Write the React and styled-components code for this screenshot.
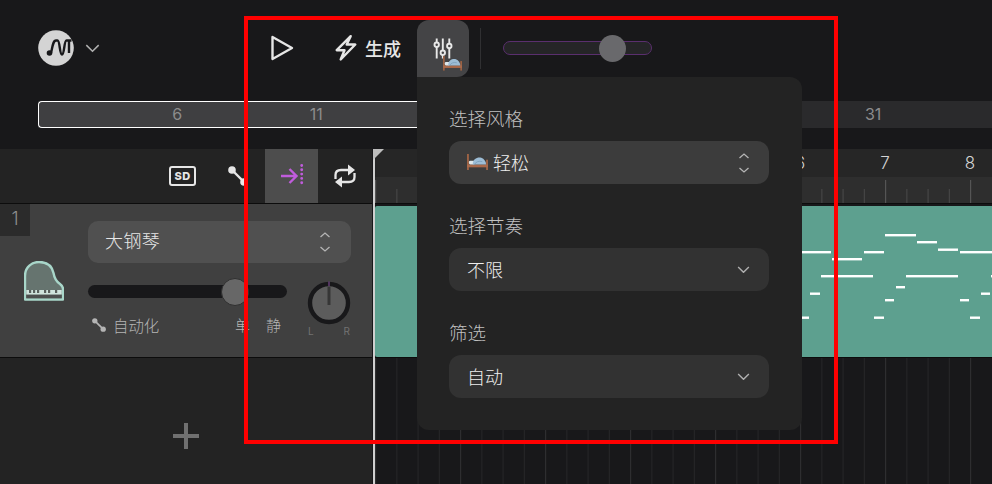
import styled, { createGlobalStyle } from "styled-components";

const GlobalStyle = createGlobalStyle`
  html, body {
    margin: 0;
    padding: 0;
    background: #18181a;
  }
  * {
    box-sizing: border-box;
  }
`;

const FONT = `Inter, "Noto Sans CJK SC", sans-serif`;

const BAR_WIDTH = 85;
const BEAT_WIDTH = BAR_WIDTH / 4;

const NOTES = [
  [801, 831, 251], [832, 862, 258], [864, 884, 251], [885, 916, 234],
  [917, 937, 241], [938, 958, 248.5], [960, 992, 251], [821, 873, 275],
  [906, 958, 275], [991, 992, 275], [896, 905, 286], [810, 820, 292.5],
  [981, 990, 292.5], [885, 894, 299], [960, 969, 299], [801, 809, 316.5],
  [874, 884, 316.5], [970, 980, 316.5],
];

const BEATS = Array.from({ length: 29 }, (_, i) => 375.6 + i * BEAT_WIDTH);

// labels under the popover never show, so those cells stay empty
const OVERVIEW_LABELS = ["6", "11", "", "", "", "31"];
const RULER_LABELS = ["", "", "", "", "6", "7", "8"];

const BedEmoji = ({ size = 21 }) => (
  <svg width={size} height={size * 0.82} viewBox="0 0 22 18">
    <rect x="0" y="1" width="2" height="17" fill="#9c6244" />
    <rect x="20" y="7" width="2" height="11" fill="#9c6244" />
    <rect x="0" y="12" width="22" height="3" fill="#a9694a" />
    <rect x="2" y="8" width="6" height="4" rx="1.5" fill="#dfe7ea" />
    <path d="M6 12 C6 6 11 4 15 5 C18 6 20 9 20 12 Z" fill="#9dbdd6" />
    <path d="M8 12 C9 9 13 8 16 9" stroke="#7fa2bd" fill="none" />
  </svg>
);

const LogoIcon = () => (
  <svg width="36" height="36" viewBox="38 30 36 36">
    <circle cx="56" cy="48" r="17.8" fill="#d4d4d4" />
    <circle cx="49.5" cy="53" r="2.8" fill="#18181a" />
    <path
      d="M51 53 C52.5 47 53 40.5 56 40.5 H57.5 C60 40.5 59.5 54.5 62 54.5 C64.5 54.5 64 40.5 66.5 40.5 H71.5 M69 40.5 V53"
      fill="none"
      stroke="#18181a"
      strokeWidth="2.4"
    />
  </svg>
);

const SmallChevron = ({ color = "#b0b0b0", width = 13, weight = 1.4 }) => (
  <svg width={width} height={width * 0.6} viewBox="0 0 13 8">
    <path d="M1 1 L6.5 6.5 L12 1" fill="none" stroke={color} strokeWidth={weight} />
  </svg>
);

const UpDown = () => (
  <svg width="12" height="20" viewBox="0 0 12 20">
    <path d="M1.5 5 L6 1 L10.5 5" fill="none" stroke="#b5b5b5" strokeWidth="1.3" />
    <path d="M1.5 15 L6 19 L10.5 15" fill="none" stroke="#b5b5b5" strokeWidth="1.3" />
  </svg>
);

const PlayIcon = () => (
  <svg width="24" height="26" viewBox="270 35 24 26">
    <path
      d="M272.5 37 L292 48 L272.5 59 Z"
      fill="none"
      stroke="#e6e6e6"
      strokeWidth="2.4"
      strokeLinejoin="round"
    />
  </svg>
);

const BoltIcon = () => (
  <svg width="24" height="28" viewBox="334 34.5 24 28">
    <path
      d="M350.7 36.7 L336.7 50.7 L344.5 50.7 L340.7 60 L355.3 45 L346.7 45 Z"
      fill="none"
      stroke="#e6e6e6"
      strokeWidth="2.4"
      strokeLinejoin="round"
    />
  </svg>
);

const SlidersIcon = () => (
  <svg width="20" height="24" viewBox="433 36 20 24">
    <g stroke="#e8e8e8" strokeWidth="1.9" fill="none">
      <path d="M436.7 37.5 V41.5 M436.7 46 V57.5" />
      <path d="M442.8 37.5 V49.5 M442.8 54 V57.5" />
      <path d="M449.3 37.5 V42.8 M449.3 47.2 V57.5" />
      <circle cx="436.7" cy="43.7" r="2.2" />
      <circle cx="442.8" cy="51.7" r="2.2" />
      <circle cx="449.3" cy="45" r="2.2" />
    </g>
  </svg>
);

const AutomationIcon = ({ size = 20, color = "#e6e6e6" }) => (
  <svg width={size} height={size} viewBox="0 0 20 20">
    <path d="M4 4 L16 16" stroke={color} strokeWidth="2.4" />
    <circle cx="4" cy="4" r="3.8" fill={color} />
    <circle cx="16" cy="16" r="3.8" fill={color} />
  </svg>
);

const PunchIcon = () => (
  <svg width="24" height="26" viewBox="280 163 24 26">
    <path
      d="M281 176 H296.5 M289.5 169 L296.5 176 L289.5 183"
      fill="none"
      stroke="#c05cdc"
      strokeWidth="2.4"
    />
    <path
      d="M301.7 165.5 V187"
      stroke="#c05cdc"
      strokeWidth="2.9"
      strokeLinecap="round"
      strokeDasharray="0 4.3"
    />
  </svg>
);

const LoopIcon = () => (
  <svg width="24" height="26" viewBox="334 164 24 26">
    <g fill="none" stroke="#e6e6e6" strokeWidth="2.3">
      <path d="M336.5 180 V176 Q336.5 171 342 171 H354" />
      <path d="M355.5 174 V178 Q355.5 183 350 183 H338" />
    </g>
    <path d="M349 165.5 L356 171 L349 176.5 Z" fill="#e6e6e6" />
    <path d="M343 177.5 L336 183 L343 188.5 Z" fill="#e6e6e6" />
  </svg>
);

const PianoIcon = () => (
  <svg width="40" height="40" viewBox="24 261 40 40">
    <path
      d="M25 299.5 V276 C25 267 32 262 39 262 C47 262 52 266 53.5 273 C54.5 279 57 282 60 284 C62 285.5 63 286.5 63 289 V299.5 Z"
      fill="#66746f"
      stroke="#a8d6c9"
      strokeWidth="2.4"
      strokeLinejoin="round"
    />
    <rect x="26.3" y="294.5" width="35.4" height="3.8" fill="#4d4f4e" />
    <rect x="26.3" y="290" width="35.4" height="4.5" fill="#cfe3dc" />
    <g fill="#59605d">
      <rect x="29" y="290" width="2.2" height="3" />
      <rect x="33" y="290" width="2.2" height="3" />
      <rect x="37" y="290" width="2.2" height="3" />
      <rect x="44" y="290" width="2.2" height="3" />
      <rect x="48" y="290" width="2.2" height="3" />
      <rect x="55" y="290" width="2.2" height="3" />
    </g>
  </svg>
);

const KnobIcon = () => (
  <svg width="44" height="44" viewBox="307 281 44 44">
    <circle cx="329" cy="303" r="19" fill="#5c5c5c" stroke="#18181a" strokeWidth="4.4" />
    <path d="M329 287 V305" stroke="#363636" strokeWidth="3" />
    <path d="M329 281.5 V286" stroke="#8a4fa3" strokeWidth="1" />
  </svg>
);

const RulerTicks = () => (
  <svg width="619" height="26" viewBox="373 177 619 26">
    {BEATS.map((x, i) => (
      <line
        key={x}
        x1={x}
        x2={x}
        y1={i % 4 === 0 ? 180 : 189}
        y2={203}
        stroke={i % 4 === 0 ? "#555" : "#464646"}
        strokeWidth="1.2"
      />
    ))}
  </svg>
);

const PianoRollNotes = () => (
  <svg width="617" height="151" viewBox="375 205 617 151">
    {NOTES.map(([x1, x2, y]) => (
      <rect key={`${x1}-${y}`} x={x1} y={y - 1} width={x2 - x1} height="2.4" fill="#fff" />
    ))}
  </svg>
);

const EmptyGrid = () => (
  <svg width="619" height="126" viewBox="373 358 619 126">
    {BEATS.map((x, i) => (
      <line key={x} x1={x} x2={x} y1={358} y2={484} stroke={i % 4 === 0 ? "#2e2e30" : "#252527"} strokeWidth="1.2" />
    ))}
  </svg>
);

const StyleField = ({ label, tone, caret, children }) => (
  <Field>
    <FieldLabel>{label}</FieldLabel>
    <SelectBox $tone={tone}>
      <SelectValue>{children}</SelectValue>
      {caret}
    </SelectBox>
  </Field>
);

export default function App() {
  return (
    <Page>
      <GlobalStyle />
      <TopBar>
        <LogoGroup>
          <LogoIcon />
          <SmallChevron width={15} weight={1.3} />
        </LogoGroup>
        <PlayButton>
          <PlayIcon />
        </PlayButton>
        <GenerateButton>
          <BoltIcon />
          <span>生成</span>
        </GenerateButton>
        <SettingsButton>
          <SlidersIcon />
          <SettingsBed>
            <BedEmoji size={19} />
          </SettingsBed>
        </SettingsButton>
        <Divider />
        <TempoTrack>
          <TempoThumb />
        </TempoTrack>
      </TopBar>

      <Overview>
        <OverviewSelection />
        {OVERVIEW_LABELS.map((label, i) => (
          <OverviewLabel key={i}>{label}</OverviewLabel>
        ))}
      </Overview>

      <Workspace>
        <SidePanel>
          <Toolbar>
            <SdBadge>SD</SdBadge>
            <ToolCell $width={54}>
              <AutomationIcon />
            </ToolCell>
            <ToolCell $width={53} $active>
              <PunchIcon />
            </ToolCell>
            <ToolCell $width={54}>
              <LoopIcon />
            </ToolCell>
          </Toolbar>
          <TrackRow>
            <TrackNumber>1</TrackNumber>
            <PianoSlot>
              <PianoIcon />
            </PianoSlot>
            <TrackControls>
              <InstrumentSelect>
                <InstrumentName>大钢琴</InstrumentName>
                <UpDown />
              </InstrumentSelect>
              <MixRow>
                <MixColumn>
                  <VolumeTrack>
                    <VolumeThumb />
                  </VolumeTrack>
                  <MixLabels>
                    <AutoLabel>
                      <AutomationIcon size={14} color="#b5b5b5" />
                      自动化
                    </AutoLabel>
                    <SoloMute>
                      <span>单</span>
                      <span>静</span>
                    </SoloMute>
                  </MixLabels>
                </MixColumn>
                <PanColumn>
                  <KnobIcon />
                  <PanLabels>
                    <span>L</span>
                    <span>R</span>
                  </PanLabels>
                </PanColumn>
              </MixRow>
            </TrackControls>
          </TrackRow>
          <AddTrack>
            <AddGlyph />
          </AddTrack>
        </SidePanel>

        <Timeline>
          <RulerNumbers>
            {RULER_LABELS.map((label, i) => (
              <RulerNumber key={i}>{label}</RulerNumber>
            ))}
          </RulerNumbers>
          <RulerTickBand>
            <RulerTicks />
          </RulerTickBand>
          <ClipLane>
            <Clip>
              <PianoRollNotes />
            </Clip>
          </ClipLane>
          <GridLane>
            <EmptyGrid />
          </GridLane>
        </Timeline>
      </Workspace>

      <Playhead />
      <PlayheadCap />

      <Popover>
        <StyleField label="选择风格" tone="#3c3c3c" caret={<UpDown />}>
          <BedEmoji size={21} />
          轻松
        </StyleField>
        <StyleField label="选择节奏" tone="#323232" caret={<SmallChevron />}>
          不限
        </StyleField>
        <StyleField label="筛选" tone="#323232" caret={<SmallChevron />}>
          自动
        </StyleField>
      </Popover>

      <Highlight />
    </Page>
  );
}

const Page = styled.div`
  position: relative;
  width: 992px;
  height: 484px;
  overflow: hidden;
  background: #18181a;
  color: #e6e6e6;
  font-family: ${FONT};
`;

const TopBar = styled.div`
  display: flex;
  align-items: flex-start;
  height: 101px;
  padding: 20px 0 0 38px;
`;

const LogoGroup = styled.div`
  display: flex;
  align-items: center;
  gap: 11px;
  height: 56px;
  width: 232px;
`;

const PlayButton = styled.div`
  display: flex;
  align-items: center;
  height: 56px;
  width: 64px;
`;

const GenerateButton = styled.div`
  display: flex;
  align-items: center;
  gap: 7px;
  height: 56px;
  width: 83px;
  padding-bottom: 1px;
  font-size: 18px;
  font-weight: 500;
`;

const SettingsButton = styled.div`
  position: relative;
  display: flex;
  align-items: center;
  width: 52px;
  height: 57px;
  padding-left: 16px;
  background: #444446;
  border-radius: 12px 12px 12px 0;
`;

const SettingsBed = styled.div`
  position: absolute;
  left: 26px;
  top: 35px;
  line-height: 0;
`;

const Divider = styled.div`
  width: 1px;
  height: 41px;
  margin: 8px 22px 0 11px;
  background: #303032;
`;

const TempoTrack = styled.div`
  position: relative;
  width: 149px;
  height: 14px;
  margin-top: 21px;
  background: #252527;
  border: 1px solid #5a2f6e;
  border-radius: 7px;
`;

const TempoThumb = styled.div`
  position: absolute;
  left: 95px;
  top: -7px;
  width: 27px;
  height: 27px;
  border-radius: 50%;
  background: #69696c;
`;

const Overview = styled.div`
  position: relative;
  display: flex;
  height: 27px;
  margin-left: 38px;
  padding-left: 69.6px;
  background: #2a2a2c;
`;

const OverviewSelection = styled.div`
  position: absolute;
  left: 0;
  top: 0;
  width: 560px;
  height: 27px;
  background: #3f3f41;
  border: 1px solid #ffffff;
  border-width: 1px 0 1px 1px;
  border-radius: 4px 0 0 4px;
`;

const OverviewLabel = styled.div`
  position: relative;
  width: 139.2px;
  text-align: center;
  font-size: 16px;
  line-height: 27px;
  color: #8c8c8c;
`;

const Workspace = styled.div`
  display: grid;
  grid-template-columns: 373px 1fr;
  margin-top: 21px;
  height: 335px;
`;

const SidePanel = styled.div`
  display: flex;
  flex-direction: column;
  padding-right: 1px;
`;

const Toolbar = styled.div`
  display: flex;
  align-items: center;
  justify-content: flex-end;
  height: 55px;
  background: #232323;
  border-bottom: 1px solid #0c0c0c;
`;

const SdBadge = styled.div`
  width: 27px;
  height: 20px;
  margin-right: 15px;
  border: 2px solid #e6e6e6;
  border-radius: 3px;
  font-size: 11px;
  font-weight: 800;
  line-height: 16px;
  text-align: center;
  letter-spacing: 0.5px;
`;

const ToolCell = styled.div`
  display: flex;
  align-items: center;
  justify-content: center;
  width: ${(p) => p.$width}px;
  height: 54px;
  background: ${(p) => (p.$active ? "#4d4d4d" : "transparent")};
`;

const TrackRow = styled.div`
  position: relative;
  display: flex;
  height: 154px;
  background: #404040;
  border-bottom: 1px solid #0c0c0c;
`;

const TrackNumber = styled.div`
  position: absolute;
  left: 0;
  top: 0;
  width: 30px;
  height: 32px;
  background: #2b2b2b;
  color: #8f8f8f;
  font-size: 18px;
  font-weight: 300;
  line-height: 30px;
  text-align: center;
`;

const PianoSlot = styled.div`
  width: 88px;
  padding: 57px 0 0 24px;
  line-height: 0;
`;

const TrackControls = styled.div`
  display: flex;
  flex-direction: column;
  width: 263px;
  padding-top: 17px;
`;

const InstrumentSelect = styled.div`
  display: flex;
  align-items: center;
  justify-content: space-between;
  height: 42px;
  padding: 0 20px 0 17px;
  background: #505050;
  border-radius: 10px;
  font-size: 18px;
  font-weight: 300;
`;

const InstrumentName = styled.span`
  padding-bottom: 5px;
  letter-spacing: 0.4px;
`;

const MixRow = styled.div`
  display: flex;
  justify-content: space-between;
  margin-top: 18px;
`;

const MixColumn = styled.div`
  display: flex;
  flex-direction: column;
  width: 199px;
`;

const VolumeTrack = styled.div`
  position: relative;
  height: 13px;
  margin-top: 4px;
  background: #18181a;
  border-radius: 7px;
`;

const VolumeThumb = styled.div`
  position: absolute;
  left: 133px;
  top: -7px;
  width: 28px;
  height: 28px;
  border-radius: 50%;
  background: #676767;
  border: 1px solid #2f2f2f;
`;

const MixLabels = styled.div`
  display: flex;
  justify-content: space-between;
  margin-top: 16px;
  padding: 0 6px 0 4px;
  color: #b5b5b5;
  font-size: 15px;
  font-weight: 300;
`;

const AutoLabel = styled.div`
  display: flex;
  align-items: center;
  gap: 7px;
  font-size: 15.4px;
`;

const SoloMute = styled.div`
  display: flex;
  gap: 16px;
`;

const PanColumn = styled.div`
  display: flex;
  flex-direction: column;
  width: 44px;
`;

const PanLabels = styled.div`
  display: flex;
  justify-content: space-between;
  padding: 0 1px;
  margin-top: 0;
  color: #727272;
  font-size: 10px;
`;

const AddTrack = styled.div`
  display: flex;
  align-items: center;
  justify-content: center;
  flex: 1;
  padding-top: 29px;
  background: #232323;
`;

const AddGlyph = styled.div`
  width: 26px;
  height: 26px;
  background:
    linear-gradient(#707070, #707070) center / 26px 4px no-repeat,
    linear-gradient(#707070, #707070) center / 4px 26px no-repeat;
`;

const Timeline = styled.div`
  display: flex;
  flex-direction: column;
  background: #18181a;
`;

const RulerNumbers = styled.div`
  display: flex;
  height: 28px;
  padding-left: 44.5px;
  background: #262626;
`;

const RulerNumber = styled.div`
  flex: none;
  width: 85px;
  font-size: 17px;
  font-weight: 300;
  line-height: 28px;
  text-align: center;
  color: #d4d4d4;
`;

const RulerTickBand = styled.div`
  height: 26px;
  background: #2e2e2e;
  line-height: 0;
`;

const ClipLane = styled.div`
  height: 155px;
  padding: 2px 0 1px 2px;
  background: #18181a;
  border-top: 1px solid #0c0c0c;
  border-bottom: 1px solid #0c0c0c;
`;

const Clip = styled.div`
  height: 151px;
  line-height: 0;
  background: #5da08f;
  border-radius: 2px 0 0 2px;
`;

const GridLane = styled.div`
  flex: 1;
  line-height: 0;
  overflow: hidden;
`;

const Playhead = styled.div`
  position: absolute;
  left: 373px;
  top: 149px;
  width: 2px;
  height: 335px;
  background: #cfcfcf;
`;

const PlayheadCap = styled.div`
  position: absolute;
  left: 373px;
  top: 149px;
  width: 0;
  height: 0;
  border-top: 11px solid #bdbdbd;
  border-right: 11px solid transparent;
`;

const Popover = styled.div`
  position: absolute;
  left: 417px;
  top: 77px;
  width: 385px;
  height: 353px;
  padding: 26px 33px 0 32px;
  background: #232323;
  border-radius: 0 12px 12px 12px;
`;

const Field = styled.div`
  display: flex;
  flex-direction: column;
  height: 107px;
`;

const FieldLabel = styled.div`
  height: 38px;
  font-size: 18.5px;
  font-weight: 300;
  line-height: 32px;
  color: #c0c0c0;
`;

const SelectBox = styled.div`
  display: flex;
  align-items: center;
  justify-content: space-between;
  height: 43px;
  padding: 0 19px 0 18px;
  background: ${(p) => p.$tone};
  border-radius: 12px;
`;

const SelectValue = styled.div`
  display: flex;
  align-items: center;
  gap: 5px;
  padding-bottom: 2px;
  font-size: 18px;
  font-weight: 300;
  color: #eeeeee;
`;

const Highlight = styled.div`
  position: absolute;
  left: 244px;
  top: 16px;
  width: 594px;
  height: 428px;
  border: 4px solid #ff0000;
  pointer-events: none;
`;
